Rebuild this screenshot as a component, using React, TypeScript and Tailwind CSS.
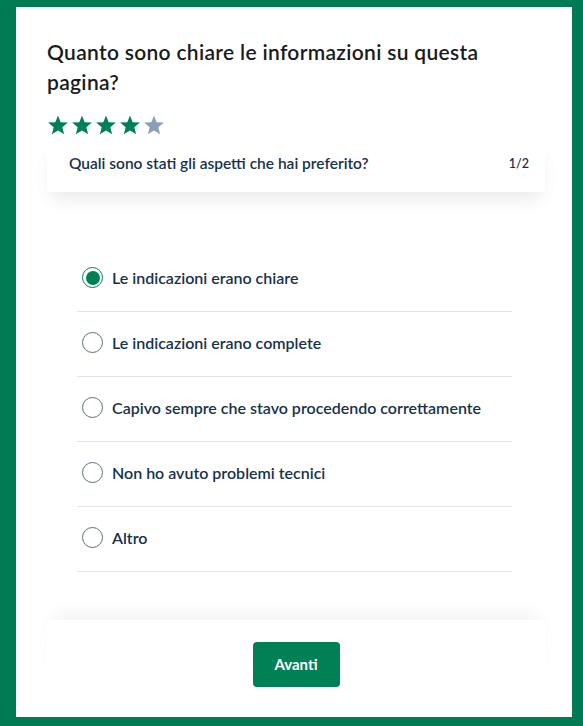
const options = [
  "Le indicazioni erano chiare",
  "Le indicazioni erano complete",
  "Capivo sempre che stavo procedendo correttamente",
  "Non ho avuto problemi tecnici",
  "Altro",
];

const StarIcon = ({ filled }: { filled: boolean }) => (
  <svg viewBox="0 0 24 24" className="h-[22px] w-[22px]">
    <polygon
      points="12,1.5 14.9,8.9 22.8,9.4 16.7,14.4 18.7,22.2 12,17.9 5.3,22.2 7.3,14.4 1.2,9.4 9.1,8.9"
      fill={filled ? "#008055" : "#8ba0b8"}
    />
  </svg>
);

const Radio = ({ checked }: { checked: boolean }) =>
  checked ? (
    <span className="flex h-[21px] w-[21px] shrink-0 items-center justify-center rounded-full border-[1.5px] border-[#008055]">
      <span className="h-[14px] w-[14px] rounded-full bg-[#008055]"></span>
    </span>
  ) : (
    <span className="h-[21px] w-[21px] shrink-0 rounded-full border-[1.5px] border-[#5c6f82]"></span>
  );

const App = () => {
  return (
    <div className="h-[726px] bg-[#007a52] pt-[7px] pl-[16px] pr-[11px] pb-[9px] font-['Lato','Noto_Sans',sans-serif]">
      <div className="flex h-full flex-col bg-white pl-[31px] pr-[27px] pt-[30px]">
        <h1 className="max-w-[470px] text-[21px] font-semibold leading-[30px] tracking-[0.015em] text-[#1b1b1b]">
          Quanto sono chiare le informazioni su questa pagina?
        </h1>

        <div className="mt-[17px] flex gap-[2px]">
          {[1, 2, 3, 4, 5].map((n) => (
            <StarIcon key={n} filled={n <= 4} />
          ))}
        </div>

        <div className="mt-[6px] flex h-[50px] items-center justify-between rounded-[4px] bg-white pl-[22px] pr-[16px] pb-[6px] shadow-[0_10px_18px_-4px_rgba(0,0,0,0.09)]">
          <span className="text-[15.5px] font-semibold text-[#17324d]">
            Quali sono stati gli aspetti che hai preferito?
          </span>
          <span className="text-[12.5px] font-semibold text-[#17324d]">1/2</span>
        </div>

        <ul className="ml-[30px] mr-[33px] mt-[55px]">
          {options.map((opt, i) => (
            <li
              key={i}
              className="flex h-[65px] items-center gap-[9px] border-b border-[#e3e4ea] pb-[3px] pl-[5px]"
            >
              <Radio checked={i === 0} />
              <span className="text-[16px] font-semibold text-[#17324d]">{opt}</span>
            </li>
          ))}
        </ul>

        <div className="mt-auto mb-[30px] flex justify-center rounded-[4px] bg-white pt-[22px] shadow-[0_-12px_18px_-6px_rgba(0,0,0,0.05)]">
          <button className="h-[45px] w-[87px] rounded-[4px] bg-[#008055] text-[15px] font-bold text-white">
            Avanti
          </button>
        </div>
      </div>
    </div>
  );
};

export default App;
